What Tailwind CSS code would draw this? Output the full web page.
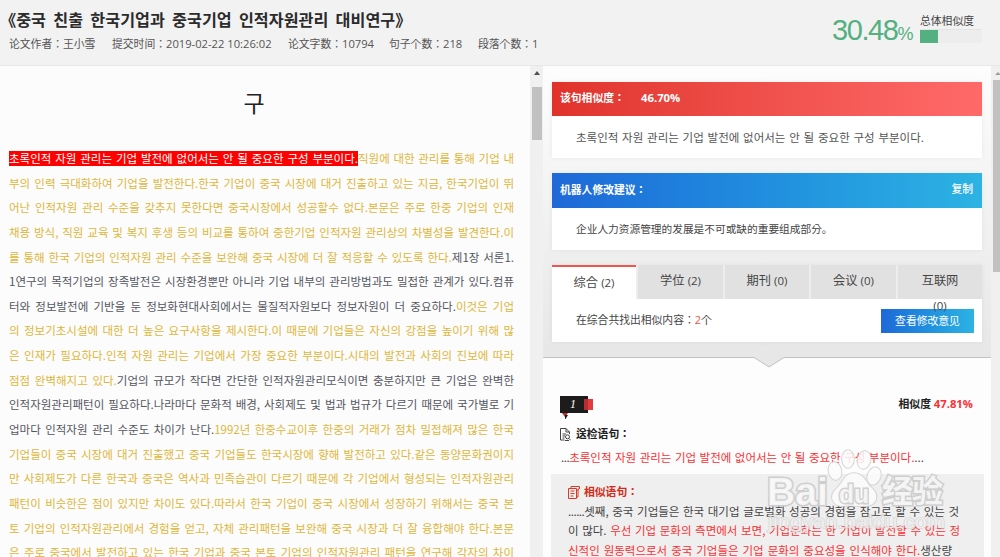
<!DOCTYPE html>
<html lang="ko">
<head>
<meta charset="utf-8">
<title>논문 유사도 보고서</title>
<script src="https://cdn.jsdelivr.net/npm/@tailwindcss/browser@4"></script>
</head>
<body class="w-[1000px] h-[557px] overflow-hidden bg-[#f2f2f2] text-[#333] font-['Open_Sans','Noto_Sans_CJK_SC',sans-serif] relative">
<header class="h-[66px] border-b border-[#e7e7e7] flex justify-between">
  <div class="pl-2 pt-[9px]">
    <h1 class="h-5 w-[420px] leading-5 text-[16.2px] font-bold whitespace-nowrap text-[#2b2b2b] font-['Noto_Sans_CJK_KR',sans-serif]"><span class="inline-block -ml-2">《</span><span class="inline-block w-[379px] [text-align-last:justify]">중국 친출 한국기업과 중국기업 인적자원관리 대비연구</span><span class="inline-block">》</span></h1>
    <div class="flex h-[18px] mt-[6px] leading-[18px] text-[10.8px] whitespace-nowrap text-[#555] pl-px">
      <span class="w-[103px]">论文作者：王小雪</span>
      <span class="w-[176px]">提交时间：<span class="text-[11.2px]">2019-02-22 10:26:02</span></span>
      <span class="w-[101px]">论文字数：<span class="text-[11.2px]">10794</span></span>
      <span class="w-[89px]">句子个数：<span class="text-[11.2px]">218</span></span>
      <span>段落个数：<span class="text-[11.2px]">1</span></span>
    </div>
  </div>
  <div class="flex w-[168px] text-[#54b080] font-['Liberation_Sans',sans-serif]">
    <div class="w-[88px] pt-[14px] leading-[32px] whitespace-nowrap"><span class="text-[29px] tracking-[-1.4px]">30.48</span><span class="text-[18px]">%</span></div>
    <div class="w-[62px] pt-[12px]">
      <div class="text-[10.8px] leading-[17px] whitespace-nowrap text-[#444] font-['Noto_Sans_CJK_SC',sans-serif]">总体相似度</div>
      <div class="h-[14px] bg-[#ededed] border-t border-[#e4e4e4]"><div class="h-[13px] w-[18px] bg-[#54b080]"></div></div>
    </div>
  </div>
</header>

<main class="flex h-[491px]">
  <section class="w-[530px] bg-[#fcfcfc] pl-[9px] overflow-hidden font-['Noto_Sans_CJK_KR',sans-serif]">
    <h2 class="h-[80px] pt-[20px] w-[490px] text-center text-[23px] leading-[32px] font-normal text-[#222]">구</h2>
    <div class="w-[505px] text-[11.5px] leading-[24.65px] text-[#dfb63a] [&>p]:h-[24.65px] [&>p]:whitespace-nowrap [&>p]:[text-align-last:justify] [&_b]:font-normal [&_b]:text-[#54565f]">
      <p class="flex"><span class="w-[349px] h-[15px] mt-[5px] leading-[14px] bg-[#ff0000] text-white inline-block">초록인적 자원 관리는 기업 발전에 없어서는 안 될 중요한 구성 부분이다.</span><span class="flex-1">직원에 대한 관리를 통해 기업 내</span></p>
      <p>부의 인력 극대화하여 기업을 발전한다.한국 기업이 중국 시장에 대거 진출하고 있는 지금, 한국기업이 뛰</p>
      <p>어난 인적자원 관리 수준을 갖추지 못한다면 중국시장에서 성공할수 없다.본문은 주로 한중 기업의 인재</p>
      <p>채용 방식, 직원 교육 및 복지 후생 등의 비교를 통하여 중한기업 인적자원 관리상의 차별성을 발견한다.이</p>
      <p>를 통해 한국 기업의 인적자원 관리 수준을 보완해 중국 시장에 더 잘 적응할 수 있도록 한다.<b>제1장 서론1.</b></p>
      <p><b>1연구의 목적기업의 장족발전은 시장환경뿐만 아니라 기업 내부의 관리방법과도 밀접한 관계가 있다.컴퓨</b></p>
      <p><b>터와 정보발전에 기반을 둔 정보화현대사회에서는 물질적자원보다 정보자원이 더 중요하다.</b>이것은 기업</p>
      <p>의 정보기초시설에 대한 더 높은 요구사항을 제시한다.이 때문에 기업들은 자신의 강점을 높이기 위해 많</p>
      <p>은 인재가 필요하다.인적 자원 관리는 기업에서 가장 중요한 부분이다.시대의 발전과 사회의 진보에 따라</p>
      <p>점점 완벽해지고 있다.<b>기업의 규모가 작다면 간단한 인적자원관리모식이면 충분하지만 큰 기업은 완벽한</b></p>
      <p><b>인적자원관리패턴이 필요하다.나라마다 문화적 배경, 사회제도 및 법과 법규가 다르기 때문에 국가별로 기</b></p>
      <p><b>업마다 인적자원 관리 수준도 차이가 난다.</b>1992년 한중수교이후 한중의 거래가 점차 밀접해져 많은 한국</p>
      <p>기업들이 중국 시장에 대거 진출했고 중국 기업들도 한국시장에 향해 발전하고 있다.같은 동양문화권이지</p>
      <p>만 사회제도가 다른 한국과 중국은 역사과 민족습관이 다르기 때문에 각 기업에서 형성되는 인적자원관리</p>
      <p>패턴이 비슷한은 점이 있지만 차이도 있다.따라서 한국 기업이 중국 시장에서 성장하기 위해서는 중국 본</p>
      <p>토 기업의 인적자원관리에서 경험을 얻고, 자체 관리패턴을 보완해 중국 시장과 더 잘 융합해야 한다.본문</p>
      <p>은 주로 중국에서 발전하고 있는 한국 기업과 중국 본토 기업의 인적자원관리 패턴을 연구해 각자의 차이</p>
    </div>
  </section>

  <div class="w-[13px] bg-[#f0f0f0] flex flex-col items-center">
    <svg class="mt-[5px]" width="6" height="4"><path d="M0 4 3 0 6 4Z" fill="#505050"/></svg>
    <div class="w-[10px] h-[53px] mt-[12px] bg-[#c1c1c1]"></div>
  </div>

  <section class="w-[448px] bg-[#fdfdfd]">
    <div class="h-[291px] px-[9px] pt-[15.5px] bg-linear-to-b from-[#fdfdfd] to-[#e7e7e7]">
      <div class="h-[76.5px] bg-white shadow-[0_0_5px_rgba(0,0,0,0.06)]">
        <div class="h-[34px] pl-2 flex items-center text-[11px] font-bold text-white bg-linear-to-r from-[#e0322b] to-[#ff6a69]"><span class="w-[81px] text-[10.8px]">该句相似度：</span><span class="text-[11.3px]">46.70%</span></div>
        <p class="ml-6 w-[348px] leading-[43px] whitespace-nowrap text-[11.5px] text-[#555] [text-align-last:justify] font-['Noto_Sans_CJK_KR',sans-serif]">초록인적 자원 관리는 기업 발전에 없어서는 안 될 중요한 구성 부분이다.</p>
      </div>
      <div class="h-[77px] mt-[15px] bg-white shadow-[0_0_5px_rgba(0,0,0,0.06)]">
        <div class="h-[34.5px] px-2 flex items-center justify-between text-[10.8px] font-bold text-white bg-linear-to-r from-[#1f68d8] to-[#2db3e3]"><span>机器人修改建议：</span><span class="font-medium pb-[3px] mr-px">复制</span></div>
        <p class="pl-6 leading-[43px] text-[10.7px] text-[#444]">企业人力资源管理的发展是不可或缺的重要组成部分。</p>
      </div>
      <div class="mt-[15px] h-[76.5px] bg-white shadow-[0_0_5px_rgba(0,0,0,0.06)]">
        <div class="flex gap-[2.4px] h-[34px] bg-[#ededed] text-[12.2px] text-center leading-[32px] text-[#444] [&>div]:flex-1 [&>div]:bg-[#e1e1e1]">
          <div class="bg-white! border-t-2 border-[#f05550] leading-[32px]">综合 <span class="text-[11.5px]">(2)</span></div>
          <div>学位 <span class="text-[11.5px]">(2)</span></div>
          <div>期刊 <span class="text-[11.5px]">(0)</span></div>
          <div>会议 <span class="text-[11.5px]">(0)</span></div>
          <div class="relative">互联网<span class="absolute z-10 left-0 w-full top-[33px] leading-4 text-[11.5px]">(0)</span></div>
        </div>
        <div class="h-[42px] pl-6 pr-[8px] pt-px flex items-center justify-between text-[10.8px] text-[#444]"><span class="whitespace-nowrap">在综合共找出相似内容：<span class="text-[#f5533d] text-[11px]">2</span>个</span><span class="w-[93px] h-6 leading-[24px] text-center text-white bg-linear-to-r from-[#1f68d8] to-[#2db3e3]">查看修改意见</span></div>
      </div>
    </div>
    <svg class="block" width="448" height="11"><path d="M0 0H448V.5H241L226 10 211 .5H0Z" fill="#e7e7e7"/><path d="M0 .5H211L226 10 241 .5H448" fill="none" stroke="#c2c2c2"/></svg>
    <div class="pl-[17px] pr-[18px] mt-[27px] flex justify-between h-[24px]">
      <svg width="34" height="24" viewBox="0 0 34 24"><path d="M0 1h28v17H0z" fill="#1e1b1c"/><path d="M24 4h9v11h-9z" fill="#e23b3f"/><path d="M24 4h4v11h-4z" fill="#b92d31"/><path d="M2 18h6l-3 4z" fill="#b92d31"/><path d="M5 20h3l-3 5z" fill="#1e1b1c"/><text x="10" y="13" fill="#fff" font-family="Liberation Serif" font-style="italic" font-size="12">1</text></svg>
      <span class="text-[10.8px] leading-[17px] font-bold text-[#222]">相似度 <span class="text-[11.3px] text-[#fb3034]">47.81%</span></span>
    </div>
    <div class="pl-[17px] mt-[6px] h-[18px] flex items-center text-[10.8px] font-bold text-[#222]">
      <svg class="mr-[5px]" width="11" height="13" viewBox="0 0 11 13" fill="none" stroke="#444"><path d="M4.5 12H.5V.5H6L9.500 4V6M6 .5V4H9.500M2.500 6H6M2.500 8H5M2.500 10H4.500"/><circle cx="7.500" cy="8.800" r="2"/><path d="M9 10.500 10.700 12.300M5 12.500h4"/></svg>送检语句：
    </div>
    <p class="ml-[18px] w-[363px] mt-[4px] h-[22px] leading-[20px] text-[11.5px] whitespace-nowrap [text-align-last:justify] text-[#fb3034] font-['Noto_Sans_CJK_KR',sans-serif]"><span class="text-[#444] tracking-[-0.5px]">...</span>초록인적 자원 관리는 기업 발전에 없어서는 안 될 중요한 구성 부분이다.<span class="text-[#444]">...</span></p>
    <div class="mt-[5px] ml-[8px] w-[433px] h-[90px] pl-[17px] pt-[9px] bg-[#efefef]">
      <div class="h-[18px] flex items-center text-[10.8px] font-bold text-[#d42b18]"><svg class="mr-1" width="12" height="13" viewBox="0 0 12 13" fill="none" stroke="#d83a26"><path d="M.5 2.500h8v10h-8zM3 2.500V.5h8.500v2L10 4v7H8.500M2.500 5h4M2.500 7.500h4M2.500 10h3M8.500 5 11.500 2"/></svg>相似语句：</div>
      <div class="text-[11.5px] leading-[19.3px] text-[#444] pt-px [&>p]:h-[19.3px] [&>p]:whitespace-nowrap [&>p]:[text-align-last:justify] font-['Noto_Sans_CJK_KR',sans-serif] [&_b]:font-normal [&_b]:text-[#fb3034]">
        <p class="w-[391px]"><span class="tracking-[-0.5px]">......</span>셋째, 중국 기업들은 한국 대기업 글로벌화 성공의 경험을 참고로 할 수 있는 것</p>
        <p class="w-[392px]">이 많다. <b>우선 기업 문화의 측면에서 보면, 기업문화는 한 기업이 발전할 수 있는 정</b></p>
        <p class="w-[384px]"><b>신적인 원동력으로서 중국 기업들은 기업 문화의 중요성을 인식해야 한다.</b>생산량</p>
      </div>
    </div>
  </section>

  <div class="w-[9px] bg-[#f0f0f0] flex flex-col items-end overflow-hidden">
    <svg class="mt-[6px] mr-[-1px]" width="6" height="4"><path d="M0 3 3 0 6 3Z" fill="#a0a0a0"/></svg>
    <div class="w-[7px] h-[192px] mt-[4px] bg-[#c1c1c1]"></div>
  </div>
</main>

<svg class="absolute left-[760px] top-[445px]" width="200" height="95" viewBox="0 0 200 95">
  <g fill="#fbfbfb" fill-opacity=".85" stroke="#cacaca" stroke-opacity=".9" stroke-width="1.500" paint-order="stroke">
    <ellipse cx="88" cy="14" rx="6" ry="9"/><ellipse cx="104" cy="15" rx="6.500" ry="9" transform="rotate(12 104 15)"/><ellipse cx="75" cy="26" rx="6.500" ry="9" transform="rotate(-12 75 26)"/><ellipse cx="114" cy="31" rx="6.500" ry="9" transform="rotate(20 114 31)"/>
    <path d="M94 28C104 28 106 38 112 43C119 49 118 60 107 61C99 62 91 60 84 61C71 62 69 50 76 44C83 38 84 28 94 28Z"/>
    <g font-weight="bold" stroke-width="3">
    <text x="7" y="60" font-family="Liberation Sans" font-size="38" textLength="61" lengthAdjust="spacingAndGlyphs">Bai</text>
    <text x="79" y="58" font-family="Liberation Sans" font-size="25" textLength="30" lengthAdjust="spacingAndGlyphs">du</text>
    <text x="122" y="57" font-family="Noto Sans CJK SC" font-size="31" textLength="61">经验</text></g>
    <text x="8" y="83" font-family="Liberation Sans" font-size="18" textLength="177" lengthAdjust="spacingAndGlyphs" fill-opacity=".65" stroke-width="1.500" stroke-opacity=".6">jingyan.baidu.com</text>
  </g>
</svg>
</body>
</html>
